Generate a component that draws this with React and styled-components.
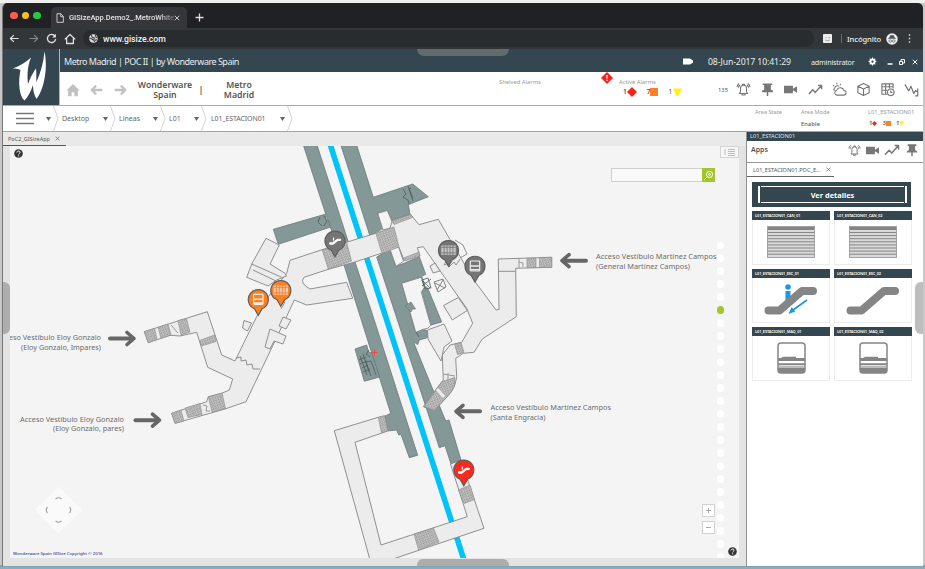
import React from "react";
import styled, { createGlobalStyle } from "styled-components";

const Global = createGlobalStyle`
  * { box-sizing: border-box; }
  html, body { margin: 0; padding: 0; background: #efefef; overflow: hidden; }
  body { font-family: "Noto Sans", "Open Sans", sans-serif; color: #555; }
  svg { display: block; flex: none; }
`;

const slate = "#34464f";

const Page = styled.div`
  width: 925px; height: 569px; padding: 3px 2px 0 2px;
  background: linear-gradient(#f0f0f0 0 3px, #c8c8c8 3px 565px, #6fa9ba 565px 567px, #9fa6a8 567px);
`;
const Window = styled.div`
  width: 921px; height: 563px; display: flex; flex-direction: column;
  background: #fff; border-radius: 5px 5px 0 0; overflow: hidden; border-left: 1px solid #777;
`;
const Text = styled.span`
  white-space: nowrap; display: block; flex: none;
  font-size: ${(p) => p.$size || 8}px;
  line-height: ${(p) => p.$lh || 12}px;
  font-weight: ${(p) => p.$weight || 400};
  color: ${(p) => p.$color || "#555"};
  letter-spacing: ${(p) => p.$ls || 0}px;
  text-align: ${(p) => p.$align || "left"};
`;
const Cell = styled.div`
  flex: 0 0 ${(p) => p.$w}px; display: flex; align-items: center;
  justify-content: ${(p) => (p.$center ? "center" : "flex-start")};
`;
const Spacer = styled.div`flex: 1;`;

/* Browser chrome */
const TabStrip = styled.div`
  height: 25px; background: #202124; display: flex; align-items: flex-end; padding-left: 7px;
`;
const Lights = styled.div`display: flex; gap: 4px; height: 25px; align-items: center; width: 41px;`;
const Light = styled.i`width: 7.6px; height: 7.6px; border-radius: 50%; background: ${(p) => p.$c};`;
const BrowserTab = styled.div`
  width: 136px; height: 21px; background: #35363a; border-radius: 5px 5px 0 0;
  display: flex; align-items: center; padding-left: 5px; padding-top: 1px;
`;
const TabTitle = styled(Text)`
  width: 105px; margin-left: 5px; font-family: Roboto, sans-serif;
  mask-image: linear-gradient(90deg, #000 85%, rgba(0, 0, 0, 0.25));
`;
const Toolbar = styled.div`
  height: 21px; background: #323639; display: flex; align-items: center; padding-left: 6px;
`;
const Omnibox = styled.div`
  width: 731px; height: 17px; margin-left: 2px; border-radius: 9px; background: #282c2e;
  display: flex; align-items: center; padding-left: 6px; gap: 5px;
  font-family: Roboto, sans-serif;
`;

/* Application header */
const Header = styled.header`display: flex; height: 57px; border-bottom: 1px solid #aaa; background: #fff;`;
const Logo = styled.div`width: 57px; background: ${slate}; border-right: 1px solid #aeb6ba;`;
const HeaderBody = styled.div`flex: 1; position: relative;`;
const TitleBar = styled.div`
  height: 23px; background: ${slate}; display: flex; align-items: center; padding: 2px 0 0 4px;
`;
const TopHandle = styled.div`
  position: absolute; top: 0; left: 357px; width: 92px; height: 7px;
  background: #636c6d; border-radius: 0 0 7px 7px;
`;
const ActionBar = styled.div`height: 33px; display: flex; align-items: center; padding: 2px 0 0 6px;`;
const Stack = styled.div`
  flex: 0 0 ${(p) => p.$w}px; display: flex; flex-direction: column; align-self: flex-start;
  padding-top: ${(p) => p.$top || 0}px; position: relative;
`;
const Counters = styled.div`
  display: flex; align-items: center; gap: ${(p) => p.$gap}px; margin-left: ${(p) => p.$ml || 0}px;
`;
const Counter = styled.div`display: flex; align-items: center; gap: ${(p) => p.$gap || 0}px;`;
const AlertBadge = styled.div`position: absolute; left: -18px; top: -2px;`;

const Crumbs = styled.nav`
  height: 26px; display: flex; align-items: center; border-bottom: 1px solid #a5a5a5; background: #fff;
`;
const Crumb = styled.div`
  flex: 0 0 ${(p) => p.$w}px; height: 25px; display: flex; align-items: center;
  justify-content: space-between; padding-left: ${(p) => p.$pl}px;
`;
const CrumbEnd = styled.div`display: flex; align-items: center; gap: 2px;`;
const AreaCol = styled.div`
  flex: 0 0 ${(p) => p.$w}px; height: 25px; display: flex; flex-direction: column; gap: 1px; padding-top: 1px;
`;

/* Workspace */
const Workspace = styled.main`flex: 1; display: flex; min-height: 0;`;
const MapPane = styled.section`
  width: 743px; background: #e3e3e3; display: flex; flex-direction: column; position: relative;
`;
const MapTabs = styled.div`height: 14px; background: #e9e9e9; display: flex;`;
const MapTab = styled.div`
  width: 63px; height: 14px; border-bottom: 1px solid #555; display: flex; align-items: center;
  padding-left: 5px; gap: 5px;
`;
const MapCanvas = styled.div`
  width: 729px; height: 412px; margin-left: 7px; position: relative; background: #f4f4f4; overflow: hidden;
`;
const LayerButton = styled.button`
  position: absolute; left: 710px; top: 0; width: 19px; height: 12px; border: 1px solid #d4d4d4;
  background: #f7f7f7; padding: 0; display: flex; align-items: center; justify-content: center;
`;
const Search = styled.div`
  position: absolute; left: 601px; top: 22px; width: 104px; height: 14px; display: flex;
  border: 1px solid #cfcfcf; background: #f9f9f9; justify-content: flex-end;
`;
const SearchButton = styled.div`
  width: 13px; height: 14px; margin: -1px; background: #a3c52c; display: flex; align-items: center; justify-content: center;
`;
const Dots = styled.div`
  position: absolute; left: 707px; top: 95.5px; display: flex; flex-direction: column; gap: 5.6px;
`;
const Dot = styled.i`
  width: 7.4px; height: 7.4px; border-radius: 50%; flex: none; background: ${(p) => (p.$on ? "#a3c52c" : "#fff")};
`;
const ZoomButtons = styled.div`
  position: absolute; left: 692px; top: 358px; display: flex; flex-direction: column; gap: 4px;
`;
const ZoomButton = styled.div`
  width: 13px; height: 13px; background: #fff; border: 1px solid #d2d2d2; display: flex;
  align-items: center; justify-content: center;
`;
const Help = styled.div`position: absolute; left: ${(p) => p.$x}px; top: ${(p) => p.$y}px;`;
const Copyright = styled(Text)`position: absolute; left: 3px; bottom: -1px;`;
const SideHandle = styled.div`
  position: absolute; top: 150px; ${(p) => (p.$right ? "right: 0;" : "left: 0;")}
  width: ${(p) => (p.$right ? 8 : 7)}px; height: 52px; background: ${(p) => (p.$right ? "#bdbdbd" : "#adadad")};
  border-radius: ${(p) => (p.$right ? "6px 0 0 6px" : "0 6px 6px 0")};
`;
const BottomHandle = styled.div`
  position: absolute; left: 414px; bottom: 0; width: 92px; height: 7px; background: #adadad; border-radius: 6px 6px 0 0;
`;

/* Side panel */
const SidePanel = styled.aside`
  flex: 1; background: #fff; border-left: 1px solid #909090; position: relative; display: flex; flex-direction: column;
`;
const PanelTitle = styled.div`height: 9px; background: ${slate}; display: flex; align-items: center; padding-left: 3px;`;
const AppsBar = styled.div`
  height: 22px; border-bottom: 1px solid #999; display: flex; align-items: center; padding: 0 4px 3px 4px; gap: 5px;
`;
const PanelTab = styled.div`
  width: 87px; height: 14px; border-bottom: 1px solid #666; display: flex; align-items: center; padding-left: 6px; gap: 5px;
`;
const Details = styled.div`
  margin: 5px 12px 0 5px; height: 25px; background: ${slate}; padding: 4px 4px 4px 6px; display: flex;
`;
const DetailsFrame = styled.div`
  flex: 1; border-left: 2px solid #fff; border-right: 2px solid #fff; padding: 0 1px; display: flex;
`;
const DetailsLabel = styled.div`
  flex: 1; border-top: 1px solid #fff; border-bottom: 1px solid #fff; display: flex; align-items: center; justify-content: center;
`;
const Cards = styled.div`
  display: grid; grid-template-columns: 78px 78px; gap: 4px; margin: 4px 0 0 5px; grid-auto-rows: 54px;
`;
const Card = styled.div`border: 1px solid #ececec; display: flex; flex-direction: column;`;
const CardHead = styled.div`
  height: 9px; margin: -1px -1px 0; flex: none; background: ${slate}; display: flex; align-items: center; padding-left: 3px;
`;
const CardBody = styled.div`flex: 1; display: flex; align-items: center; justify-content: center;`;

/* Icons */
const Svg = ({ w, h = w, vb = 16, vh = vb, children, c = "#777", sw = 1.3 }) => (
  <svg width={w} height={h} viewBox={`0 0 ${vb} ${vh}`} fill="none" stroke={c} strokeWidth={sw} strokeLinejoin="round">
    {children}
  </svg>
);
const Cross = ({ s = 6, c = "#555", sw = 1 }) => (
  <Svg w={s} vb={8} c={c} sw={sw}><path d="M1 1l6 6M7 1L1 7" /></Svg>
);
const Arrow = ({ w, c, flip, sw = 1.6 }) => (
  <Svg w={w} c={c} sw={sw}><path d={flip ? "M2 8h12M9 3l5 5-5 5" : "M14 8H2M7 3L2 8l5 5"} /></Svg>
);
const Bell = ({ s }) => (
  <Svg w={s} sw={1.2}>
    <path d="M3.6 12.3h8.8l-1.2-1.9V6.7a3.2 3.2 0 0 0-6.4 0v3.7zM7 3.6V2.4h2v1.2M6.5 12.4v1.4h3v-1.4M3.2 1.6A7 7 0 0 0 1.1 5.5M4.3 3.2A4.5 4.5 0 0 0 2.6 6M12.8 1.6a7 7 0 0 1 2.1 3.9M11.7 3.2A4.5 4.5 0 0 1 13.4 6" />
  </Svg>
);
const PushPin = ({ s }) => (
  <Svg w={s}><path fill="#777" stroke="none" d="M3 1.5h10v1.8h-1.4v4.9l2.2.8v1.9H8.8V15H7.2v-4.1h-5V9l2.200-.8V3.300H3z" /></Svg>
);
const Camera = ({ s }) => (
  <Svg w={s}><path fill="#777" stroke="none" d="M0 3.500h11v3.600L16 4v8l-5-3.100v3.600H0z" /></Svg>
);
const Trend = ({ s }) => (
  <Svg w={s} sw={1.5}><path d="M1 12.7l4.1-4.4 2.7 2.8L14 4M10.6 3.6h3.9v4" /></Svg>
);
const Weather = ({ s }) => (
  <Svg w={s} sw={1.1}>
    <path d="M5.2 14h7.2a2.5 2.5 0 0 0 .2-5A4 4 0 0 0 5 8.7 2.7 2.7 0 0 0 5.2 14zM2.4 9.3a4 4 0 0 1 5.4-4.9M1 3.4l1.3 1.1M5.2.9v1.7M9.4 2l-.8 1.5" />
  </Svg>
);
const Cube = ({ s }) => (
  <Svg w={s} sw={1.2}><path d="M8 1.5l6 3v7l-6 3-6-3v-7zM2 4.5l6 3 6-3M8 7.5v7" /></Svg>
);
const Schedule = ({ s }) => (
  <Svg w={s} sw={1.2}>
    <path d="M8 13H2V2h12v5M2 5h12M2 8.8h6M6 2v11M10 2v5" /><circle cx="11.5" cy="11" r="3.5" /><path d="M11.5 9v2.2h1.7" />
  </Svg>
);
const Falling = ({ s }) => (
  <Svg w={s}><path d="M1 2.5l4 7 2.4-5 3 7.7 2.4-3.7" /><path d="M11.8 10h2.5M14.6 7v8M12 14.7h3" /></Svg>
);
const Diamond = ({ s }) => (
  <Svg w={s} vb={10}><path fill="#fb2018" stroke="none" d="M5 0l5 5-5 5-5-5z" /></Svg>
);
const Square = ({ s }) => <Svg w={s} vb={10}><rect width="10" height="10" fill="#ff7f27" stroke="none" /></Svg>;
const Triangle = ({ s }) => <Svg w={s} vb={10}><path fill="#fff01c" stroke="none" d="M0 .5h10L5.7 9.5H4.3z" /></Svg>;
const Separator = () => (
  <svg width="6" height="25" viewBox="0 0 6 25" fill="none" stroke="#d4d4d4"><path d="M.5 0l4.500 12.500L.5 25" /></svg>
);
const Caret = () => <svg width="5" height="4" viewBox="0 0 5 4"><path d="M0 0h5L2.5 4z" fill="#666" /></svg>;
const HelpIcon = () => (
  <svg width="9" height="9" viewBox="0 0 18 18">
    <circle cx="9" cy="9" r="8.6" fill="#333" />
    <path d="M5.8 7c.1-4 6.5-4 6.5-.5 0 2.2-3 2-3 4.4M9.3 12.6v2.2" fill="none" stroke="#fff" strokeWidth="2" />
  </svg>
);

const Shutter = () => (
  <svg width="48" height="32" viewBox="0 0 48 32">
    <rect x=".5" y=".5" width="47" height="31" fill="#d9d9d9" stroke="#a2a2a2" />
    <rect x="1" y="1" width="46" height="3" fill="#858585" />
    {[6.5, 9.6, 12.7, 15.8, 18.9, 22, 25.1, 28.2].map((y) => <path key={y} d={`M1 ${y}h46`} stroke="#858585" strokeWidth="1" />)}
  </svg>
);
const Escalator = ({ person }) => (
  <svg width="54" height="34" viewBox="0 0 54 34">
    {person && <g fill="#1c97e2"><circle cx="24" cy="4" r="2.8" /><path d="M21.5 8h5v12h-5z" /></g>}
    <path d="M4.5 27.5h11L38 8h11" fill="none" stroke="#858585" strokeWidth="8" strokeLinecap="round" strokeLinejoin="round" />
    {person && <><path d="M43 17L29 27" stroke="#1c97e2" strokeWidth="1.6" /><path d="M24.5 31l3.2-7 3.5 4.6z" fill="#1c97e2" /></>}
  </svg>
);
const Turnstile = () => (
  <svg width="29" height="32" viewBox="0 0 29 32">
    <rect x="1" y="1" width="27" height="30" rx="3" fill="#fff" stroke="#858585" strokeWidth="1.5" />
    <path d="M1 16h3l2-1.2h13v1.2h9v3H1zM1 21.3h27v2H1zM1 26h27v2.7l-2 2.3H3l-2-2z" fill="#858585" />
    <path d="M2 24h25v2H2z" fill="#bbb" />
  </svg>
);

/* Station map, drawn in window coordinates */
const pinColors = { grey: "#757575", orange: "#ff7f1e", red: "#fb2a1d" };
const Pin = ({ x, y, color, kind }) => (
  <g transform={`translate(${x} ${y})`}>
    <path d="M-3.8 9.3L0 15.8l3.8-6.5A10 10 0 1 0-3.8 9.3z" fill={pinColors[color]} stroke="#5d5d5d" strokeWidth="1.2" />
    {kind === "escalator" && (
      <>
        <path d="M-4.800 2.500h2.600L2.500-1.200h2.600" fill="none" stroke="#fff" strokeWidth="2.300" strokeLinecap="round" />
        <path d="M-1.500-3.500v3" stroke="#fff" strokeWidth="1.200" />
      </>
    )}
    {kind === "gate" && (
      <>
        <rect x="-7.2" y="-5" width="14.4" height="9.4" fill="#ddd" fillOpacity=".8" />
        <path d="M-7.2-3.2H7.2M-7.2 2.4H7.2M-4.4-5v9.4M-1.5-5v9.4M1.5-5v9.4M4.4-5v9.4" stroke={pinColors[color]} strokeWidth=".9" />
      </>
    )}
    {kind === "machine" && (
      <>
        <rect x="-4.7" y="-5.2" width="9.4" height="10" rx=".8" fill={pinColors[color]} stroke="#eee" strokeWidth="1.2" />
        <path d="M-4.4-.2h8.8M-4.4 3.6h8.8" stroke="#eee" strokeWidth="1.6" />
      </>
    )}
  </g>
);
const MapArrow = ({ x, y, left }) => (
  <g transform={`translate(${x} ${y}) scale(${left ? -1 : 1} 1)`} fill="none" stroke="#666" strokeLinecap="round" strokeLinejoin="round">
    <path d="M-12 0H10" strokeWidth="4" /><path d="M5-6l7 6-7 6" strokeWidth="3.6" />
  </g>
);
const Label = ({ x, y, w, end, children }) => (
  <text x={x} y={y} textLength={w} lengthAdjust="spacingAndGlyphs" textAnchor={end ? "end" : "start"} fontSize="7.7" fill="#6c6c6c" fontFamily="Noto Sans, sans-serif">
    {children}
  </text>
);
const hatches = [
  "322.3,250.3 346.7,242.5 351.5,261 328.3,269.3",
  "375.7,233 394,227 399,247 382,253.5",
  "391.7,221 411,214.5 412.5,217.5 394,224.5",
  "403.5,258 419,252 420,256 405,261",
  "144.3,331.7 154.5,328.3 157,339 148.3,342.7",
  "158,327.3 168,324 171,335 161,338.3",
  "178,320.5 186.5,318.5 190,332 181,335",
  "199.5,340.5 214.5,335 216,341.5 201.5,346",
  "171.7,413.3 181,410 184,421 175,423.3",
  "185,408 200,403.5 202,414.5 188,417.5",
  "208.3,397 222,393 225.5,408.5 212,412",
  "527,258.3 536,258 536,267.5 527,267.6",
  "539.5,257.5 551.7,257.3 551.7,267.3 539.5,267.5",
  "454.5,344 461,342.5 464,352.5 457.5,354.5",
  "378.3,417.3 384.5,415.5 388,430.5 381.5,433",
  "414,534 433.5,528 439,542 418.5,550",
  "458.5,490 470,485 474.5,499.5 464,503.5",
];
const StationMap = () => (
  <svg width="729" height="412" viewBox="10 146 729 412">
    <defs>
      <pattern id="hatch" width="2.6" height="2.6" patternUnits="userSpaceOnUse" patternTransform="rotate(-18)">
        <rect width="2.6" height="2.6" fill="#c9c9c9" />
        <path d="M0 .6h1.8M1 1.9h1.6" stroke="#858585" strokeWidth=".7" />
      </pattern>
    </defs>
    <g fill="#849898" stroke="#687878" strokeWidth=".8">
      <path d="M303 144L326 215 344.3 266 390.7 413.3 385 416 387.7 431 396.7 430 398.7 435 401 434.3 409.3 457.7 417.7 455.3 371 310 347.7 240 316.7 144z" />
      <path d="M355 349l11.7-4 2 7 3 1 8 24-15.4 4.3z" />
      <path d="M273.3 229.3L325 214.3l1.3 6 2.7 1 1 6-51.7 17z" />
      <path d="M340.5 144h15.8l17 53.3L412.7 184l15.6 12.7-20 8 1.7 9.3-18.3 6.5-4.4-9.8-9.6 3 6 16.5-13.7 6z" />
      <path d="M376.7 257l13.3-7.7L396 266.3l8-3 15.3-6.6 6.4 17.6-4 2 3.3 10 2.7 1.7 14 34-10.7 3-9.3-35h-4l4-5-3.7-7.7-16.3 6L415.3 332l7.4-2.7 4.6 1.4v7l-8 2.3-1.6 4.6-4.4-3L445.7 421l3.3-1 12 40-10 4-6-18.3-5.7 2z" />
    </g>
    <path d="M329.7 143L464.3 561" stroke="#00c3f7" strokeWidth="5.6" />
    <g fill="#ececec" stroke="#858585" strokeWidth=".9" strokeLinejoin="round">
      <path d="M290 260.3L323.3 249.3 375.7 233.3 391.7 221.7 410.7 214.5 419 224.7 438.3 219.3 450 239.5 475 281.7 496 310 499 309.3 498.3 259 551.7 257.3V267.3L515.7 268.3 516.3 316.7 482.3 339 474 352.3 463.3 353.3 455.7 358.3 456.7 376.7Q455 388 450 393.3L434.3 410.7 423.3 406.7Q430 397 443.3 380L442.3 355 450 345 461.7 342.3 472.7 323.3 466.7 308.3 458.3 296.7 423.3 246.7 417.3 247.7 420 256 404 260 399 247.3 356 261.7 328.3 269.3 304 277.3Q299 283 310 289L346.7 282.3 352.7 298.3 306.7 305 294.3 300 285 320 246 401.7 225 409 175 423.3 171.7 413.3 206.7 401.7 208.3 396.7 221.7 393.3 229.3 390 232.7 379 207.7 367.3 196.7 332.3 180 336 170 335.3 148.3 342.7 144.3 331.7 207.3 311.7 221.7 355 235 361 258.3 313.3 268.3 296.7 286.7 273.3z" />
      <path d="M266 238.3L279.3 245 270 264 285 273.3 286.5 276 276.7 280 268 286 246.7 277.3 251.7 264z" />
      <path d="M251.7 264L281.7 277.3M253 270L276 281" />
      <path d="M334.3 430.7L378.3 417.3 385 416 387.7 431 355 442.3 381 545 467.3 516.7 450.5 464 461 460 484 528.3 390 560H370z" />
      <path d="M377.7 213.3l9.6-2.8 4.7 11-2 6.5-7 2z" fill="#f4f4f4" />
      <path d="M390 249.3l8.5-2.5 5 14.5-7.5 5z" fill="#f4f4f4" />
      <path d="M401.7 283.3l19.600-6 3 10-3 5 9.500 33-3 3-4.500 1-7.500 3z" fill="#f4f4f4" />
      <path d="M443.5 305.5l14.8-8 9 13-15 9.5zM427.5 330l16.5-6 8 17-8 6-3 14-13-22zM430 266l5-3 5 8-7 2z" />
      <path d="M244 320.5l7.5 2.5-4 8-5-3zM283 317l8 3-5 9-7-3zM270 329l16 7-3 8-9-3-4 8-5-2z" />
      <path d="M455 240l8 5 4 9-7 4M498.3 271.3H515M236 358l5-1 0 4 5-1 1 5 5-1 1 5h7" fill="none" />
      <path d="M447 260l-3 5 5-2 0 4 5-5 2 3 4-6M270 291l5 4-2 3 6 0v4h6l-4 7" fill="none" />
    </g>
    <path d="M405 293l6-5 2 9-4 2zM413 301l-5-2-4 6 6 5z" fill="#849898" stroke="none" opacity="0" />
    {hatches.map((points) => <polygon key={points} points={points} fill="url(#hatch)" stroke="#8b8b8b" strokeWidth=".6" />)}
    <path d="M454.6 377.5L441.5 382Q432 396 424 406.5L434.3 410.5 448 396Q457 386 454.6 377.5z" fill="url(#hatch)" stroke="#858585" strokeWidth=".7" />
    <path d="M171 325l7 8M203 405l4 1-1 5 4 0M519 258v10M519 262l4 1v4M443 374l12 2M448 373v7" stroke="#999" fill="none" />
    <path d="M437 389l7 8" stroke="#eee" strokeWidth="3" />
    <g fill="none" stroke="#4d5d5d" strokeWidth=".8">
      <path d="M403 189l3 5-3 3 5 3 1 4M408 186l5 15M411 188l-2 1 4 9M320 217l-2 5 4 4M324 216l3 5-3 5M369 350l-3 4 4 3M371 361l5 14M371 361l-5 1 5 14" />
      <path d="M360 356l7 19M363 354l6 18M359 360l7-3M360 364l7-3M362 368l6-3M363 372l7-3M422 280l6-2 3 10-6 1zM422 286l9-7M423 281l7 7M416 332l3 5" />
    </g>
    <path d="M434 282l9-3 3 8-8 5zM435 283l10 5M437 290l6-10" fill="none" stroke="#777" strokeWidth=".9" />
    <path d="M411 302l-6 4 6 6 1.500-3h3z" fill="#849898" stroke="#687878" strokeWidth=".7" />
    <path d="M371.5 352.5h6M374.5 349.5v6" stroke="#ee4b3e" strokeWidth="1" />
    <MapArrow x={122} y={338.5} /><MapArrow x={147.5} y={420.2} />
    <MapArrow x={574} y={260.7} left /><MapArrow x={468} y={411.3} left />
    <Label x={596} y={259} w={120.5}>Acceso Vestíbulo Martínez Campos</Label>
    <Label x={596} y={268.7} w={94}>(General Martínez Campos)</Label>
    <Label x={490.5} y={410.3} w={120.5}>Acceso Vestíbulo Martínez Campos</Label>
    <Label x={490.5} y={420.3} w={55}>(Santa Engracia)</Label>
    <Label x={101} y={340} w={104} end>Acceso Vestíbulo Eloy Gonzalo</Label>
    <Label x={101} y={349.5} w={80} end>(Eloy Gonzalo, Impares)</Label>
    <Label x={124} y={421.5} w={104} end>Acceso Vestíbulo Eloy Gonzalo</Label>
    <Label x={124} y={431.3} w={71} end>(Eloy Gonzalo, pares)</Label>
    <path d="M58.5 486.5L82 510 58.5 533.5 35 510z" fill="#fafafa" />
    <path d="M55.5 499q3-2.5 6 0M55.5 521q3 2.5 6 0M47.5 507q-2.5 3 0 6M69.5 507q2.5 3 0 6" fill="none" stroke="#a5a5a5" strokeWidth="1.2" />
    <Pin x={335} y={241} color="grey" kind="escalator" />
    <Pin x={280.8} y={290.5} color="orange" kind="gate" />
    <Pin x={258.3} y={299.5} color="orange" kind="machine" />
    <Pin x={448.5} y={250.5} color="grey" kind="gate" />
    <Pin x={475} y={266.2} color="grey" kind="machine" />
    <Pin x={463.8} y={470} color="red" kind="escalator" />
  </svg>
);

const crumbItems = [
  { w: 57, pl: 3, label: "Desktop" },
  { w: 50, pl: 3, label: "Lineas" },
  { w: 41, pl: 3, label: "L01" },
  { w: 86, pl: 4, label: "L01_ESTACION01", ls: -0.1 },
];
const cards = [
  ["L01_ESTACION01_CAN_01", <Shutter />],
  ["L01_ESTACION01_CAN_02", <Shutter />],
  ["L01_ESTACION01_ESC_01", <Escalator person />],
  ["L01_ESTACION01_ESC_02", <Escalator />],
  ["L01_ESTACION01_MAQ_01", <Turnstile />],
  ["L01_ESTACION01_MAQ_02", <Turnstile />],
];

export default function App() {
  return (
    <Page>
      <Global />
      <Window>
        <TabStrip>
          <Lights><Light $c="#ff5a52" /><Light $c="#fdbc2e" /><Light $c="#28c840" /></Lights>
          <BrowserTab>
            <Svg w={8} h={10} vb={12} vh={15} c="#ddd"><path d="M1.5 1h5.5l4 4v9H1.5zM7 1v4.5h4" /></Svg>
            <TabTitle $size={7.5} $color="#e4e4e4" $weight={500}>GISizeApp.Demo2_.MetroWhite</TabTitle>
            <Cross s={6} c="#ccc" sw={1.3} />
          </BrowserTab>
          <Cell $w={25} $center>
            <Svg w={9} h={21} vb={9} vh={21} c="#ddd" sw={1.3}><path d="M4.5 6.5v8M.5 10.5h8" /></Svg>
          </Cell>
        </TabStrip>
        <Toolbar>
          <Cell $w={19}><Arrow w={11} c="#e2e2e2" /></Cell>
          <Cell $w={18}><Arrow w={11} c="#85888a" flip /></Cell>
          <Cell $w={18}><Svg w={11} c="#e2e2e2" sw={2}><path d="M13 4.5A6 6 0 1 0 14 9" /><path d="M14.4 1v5.5H9z" fill="#e2e2e2" stroke="none" /></Svg></Cell>
          <Cell $w={17}><Svg w={12} c="#e2e2e2" sw={1.7}><path d="M1 8.5L8 2l7 6.5M3.5 7v7h9V7" /></Svg></Cell>
          <Omnibox>
            <Svg w={9} c="#ddd"><circle cx="8" cy="8" r="7" fill="#ddd" /><path d="M4 2l2 4 4 1-2 4-4-3-3 0M11 1l1 4 3 2M9 14l2-3 3-1" stroke="#44484a" strokeWidth="2" /></Svg>
            <Text $size={8.7} $color="#f1f1f1" $weight={500} $ls={-0.05}>www.gisize.com</Text>
          </Omnibox>
          <Cell $w={27} $center><Svg w={9} vb={10}><rect width="10" height="10" rx="1" fill="#eee" stroke="none" /><circle cx="3.4" cy="4" r=".8" fill="#aaa" stroke="none" /><path d="M2.5 6.5q2.5 2 5 0M6 4h2" stroke="#aaa" /></Svg></Cell>
          <Cell $w={6}><Svg w={1} h={9} vb={1} vh={9}><path d="M.5 0v9" stroke="#6b6e70" /></Svg></Cell>
          <Cell $w={39}><Text $size={7.6} $color="#eee" $weight={500} $ls={-0.1}>Incógnito</Text></Cell>
          <Cell $w={18}><Svg w={12} vb={24}><circle cx="12" cy="12" r="11.5" fill="#eee" stroke="none" /><path d="M4 11h16M7 10l2-5h6l2 5z" fill="#505356" stroke="#505356" /><circle cx="8.5" cy="16" r="2.6" stroke="#505356" /><circle cx="15.5" cy="16" r="2.6" stroke="#505356" /></Svg></Cell>
          <Cell $w={10} $center><Svg w={3} h={9} vb={3} vh={9}><path d="M.8 1h1.4M.8 4.5h1.4M.8 8h1.4" stroke="#ddd" /></Svg></Cell>
        </Toolbar>

        <Header>
          <Logo>
            <svg width="56" height="56" viewBox="3 49 56 56">
              <path fill="#fff" d="M12.500 68.500Q23 65 31 57.500C27.500 66 27 75 28 84 30.500 77 33 73 36 68.200c.5 5 .3 9 .3 14C40.500 73 43.500 63 44.500 51.500 48 67 44.500 89 36.500 99c-2.500-4-3.500-9-3.500-14C31 91 28 97 24.500 100.500 19 96 18 82 20.500 70 18 68.800 15 68.500 12.500 68.500z" />
            </svg>
          </Logo>
          <HeaderBody>
            <TitleBar>
              <Cell $w={619}><Text $size={9} $color="#e8ecee" $ls={-0.5}>Metro Madrid | POC II | by Wonderware Spain</Text></Cell>
              <Cell $w={25}><Svg w={10} h={7} vb={10} vh={7}><path d="M0 .5h7l3 2v2l-3 2H0z" fill="#fff" stroke="none" /></Svg></Cell>
              <Cell $w={103}><Text $size={8.7} $color="#e8ecee" $ls={-0.12}>08-Jun-2017 10:41:29</Text></Cell>
              <Cell $w={57}><Text $size={7.2} $color="#e8ecee" $ls={-0.2}>administrator</Text></Cell>
              <Cell $w={19}><Svg w={9} c="#fff" sw={3}><circle cx="8" cy="8" r="4" /><path d="M8 1v14M1 8h14M3 3l10 10M13 3L3 13" strokeWidth="1.8" /><circle cx="8" cy="8" r="2" fill={slate} stroke="none" /></Svg></Cell>
              <Cell $w={12}><Svg w={6} vb={6} c="#fff"><path d="M.5 5h5" /></Svg></Cell>
              <Cell $w={13}><Svg w={6} vb={6} c="#fff" sw={1}><path d="M.5 2.5h3v3h-3zM2 2V.6h3.5V4H4" /></Svg></Cell>
              <Cross s={6} c="#fff" sw={1.3} />
            </TitleBar>
            <TopHandle />
            <ActionBar>
              <Cell $w={24}><Svg w={14}><path d="M8 1L15.500 8.500H13.500V15H9.600v-4.500H6.400V15H2.500V8.500H.5z" fill="#c0c0c0" stroke="none" /></Svg></Cell>
              <Cell $w={23}><Arrow w={14} c="#c2c2c2" sw={2.8} /></Cell>
              <Cell $w={24}><Arrow w={14} c="#c2c2c2" flip sw={2.8} /></Cell>
              <Cell $w={56} $center><Text $size={8.7} $lh={10} $weight={600} $align="center">Wonderware<br />Spain</Text></Cell>
              <Cell $w={16} $center><Text $size={9} $weight={600}>|</Text></Cell>
              <Cell $w={60} $center><Text $size={8.7} $lh={10} $weight={600} $align="center">Metro<br />Madrid</Text></Cell>
              <Cell $w={230} />
              <Stack $w={120} $top={4}><Text $size={5.8} $lh={9} $color="#999">Shelved Alarms</Text></Stack>
              <Stack $w={99} $top={4}>
                <AlertBadge><Svg w={12} vb={12}><path d="M6 0l6 6-6 6-6-6z" fill="#fb2018" stroke="none" /><path d="M6 3v3.500M6 7.800v1.200" stroke="#fff" /></Svg></AlertBadge>
                <Text $size={5.8} $lh={9} $color="#999">Active Alarms</Text>
                <Counters $gap={10} $ml={4}>
                  <Counter><Text $size={6.5} $lh={10} $weight={600}>1</Text><Diamond s={10} /></Counter>
                  <Counter $gap={0}><Text $size={6.5} $lh={10} $weight={600}>7</Text><Square s={8} /></Counter>
                  <Counter $gap={1}><Text $size={6.5} $lh={10}>1</Text><Triangle s={9} /></Counter>
                </Counters>
              </Stack>
              <Cell $w={18}><Text $size={5.8}>135</Text></Cell>
              {[Bell, PushPin, Camera, Trend, Weather, Cube, Schedule, Falling].map((Icon, i) => (
                <Cell key={i} $w={24}><Icon s={i === 2 ? 13 : 15} /></Cell>
              ))}
            </ActionBar>
          </HeaderBody>
        </Header>

        <Crumbs>
          <Crumb $w={56} $pl={13}>
            <Svg w={18} h={13} vb={18} vh={13} c="#777"><path d="M0 1.500h18M0 6.500h18M0 11.500h18" strokeWidth="1.500" /></Svg>
            <CrumbEnd><Caret /><Separator /></CrumbEnd>
          </Crumb>
          {crumbItems.map((c) => (
            <Crumb key={c.label} $w={c.w} $pl={c.pl}>
              <Text $size={7} $color="#666" $ls={c.ls}>{c.label}</Text>
              <CrumbEnd><Caret /><Separator /></CrumbEnd>
            </Crumb>
          ))}
          <Spacer />
          <AreaCol $w={46}><Text $size={5.6} $lh={11} $color="#999">Area State</Text></AreaCol>
          <AreaCol $w={67}>
            <Text $size={5.6} $lh={11} $color="#999">Area Mode</Text>
            <Text $size={5.6} $lh={11} $weight={500} $ls={0.2}>Enable</Text>
          </AreaCol>
          <AreaCol $w={55}>
            <Text $size={5.8} $lh={11} $color="#999">L01_ESTACION01</Text>
            <Counters $gap={5} $ml={1}>
              <Counter><Text $size={6} $lh={9} $weight={600}>1</Text><Diamond s={5} /></Counter>
              <Counter><Text $size={6} $lh={9} $weight={600}>3</Text><Square s={5} /></Counter>
              <Counter><Text $size={6} $lh={9} $weight={600}>1</Text><Triangle s={5} /></Counter>
            </Counters>
          </AreaCol>
        </Crumbs>

        <Workspace>
          <MapPane>
            <MapTabs><MapTab><Text $size={5.5}>PoC2_GISizeApp</Text><Cross s={5} /></MapTab></MapTabs>
            <MapCanvas>
              <StationMap />
              <Help $x={3.5} $y={3}><HelpIcon /></Help>
              <LayerButton><Svg w={12} h={8} vb={12} vh={8} c="#bbb" sw={1}><path d="M1 1v6M4 1.500h7M4 3.500h7M4 5.500h7M4 7.500h7" /></Svg></LayerButton>
              <Search><SearchButton><Svg w={11} c="#fff" sw={1.4}><circle cx="9.5" cy="6.5" r="4.5" /><circle cx="9.5" cy="6.5" r="1.3" /><path d="M6 10l-4 4" /></Svg></SearchButton></Search>
              <Dots>{Array.from({ length: 25 }, (_, i) => <Dot key={i} $on={i === 5} />)}</Dots>
              <ZoomButtons>
                <ZoomButton><Svg w={5} vb={5} c="#aaa" sw={1}><path d="M0 2.500h5M2.500 0v5" /></Svg></ZoomButton>
                <ZoomButton><Svg w={5} vb={5} c="#aaa" sw={1}><path d="M0 2.500h5" /></Svg></ZoomButton>
              </ZoomButtons>
              <Help $x={717.5} $y={401}><HelpIcon /></Help>
              <Copyright $size={4.3} $color="#34389a" $weight={500}>Wonderware Spain GISize Copyright © 2016</Copyright>
            </MapCanvas>
            <SideHandle />
            <BottomHandle />
          </MapPane>
          <SidePanel>
            <PanelTitle><Text $size={5.7} $lh={9} $color="#dfe5e7">L01_ESTACION01</Text></PanelTitle>
            <AppsBar>
              <Text $size={7} $weight={600}>Apps</Text><Spacer />
              <Bell s={13} /><Camera s={13} /><Trend s={16} /><PushPin s={14} />
            </AppsBar>
            <PanelTab><Text $size={5.6}>L01_ESTACION01.POC_E...</Text><Cross s={5} /></PanelTab>
            <Details><DetailsFrame><DetailsLabel><Text $size={7.4} $weight={700} $color="#fff">Ver detalles</Text></DetailsLabel></DetailsFrame></Details>
            <Cards>
              {cards.map(([name, art]) => (
                <Card key={name}>
                  <CardHead><Text $size={3.9} $lh={9} $weight={600} $color="#fff" $ls={-0.1}>{name}</Text></CardHead>
                  <CardBody>{art}</CardBody>
                </Card>
              ))}
            </Cards>
            <SideHandle $right />
          </SidePanel>
        </Workspace>
      </Window>
    </Page>
  );
}
